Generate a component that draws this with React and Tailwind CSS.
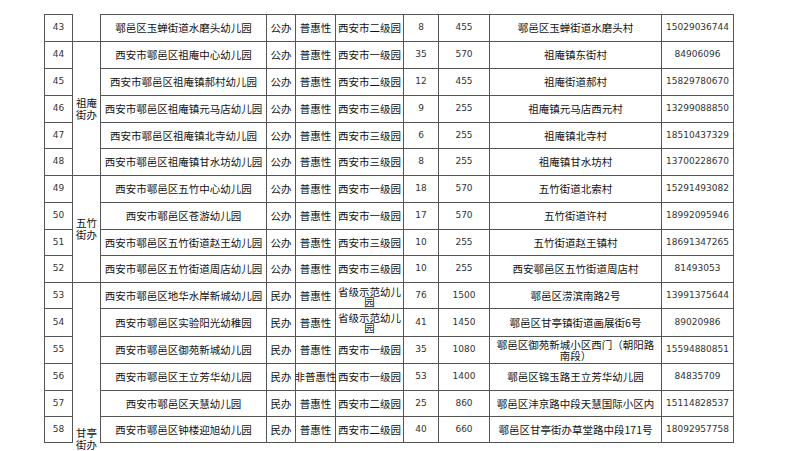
const rows = [
  ["43", "鄠邑区玉蝉街道水磨头幼儿园", "公办", "普惠性", "西安市二级园", "8", "455", "鄠邑区玉蝉街道水磨头村", "15029036744"],
  ["44", "西安市鄠邑区祖庵中心幼儿园", "公办", "普惠性", "西安市一级园", "35", "570", "祖庵镇东街村", "84906096"],
  ["45", "西安市鄠邑区祖庵镇郝村幼儿园", "公办", "普惠性", "西安市二级园", "12", "455", "祖庵街道郝村", "15829780670"],
  ["46", "西安市鄠邑区祖庵镇元马店幼儿园", "公办", "普惠性", "西安市三级园", "9", "255", "祖庵镇元马店西元村", "13299088850"],
  ["47", "西安市鄠邑区祖庵镇北寺幼儿园", "公办", "普惠性", "西安市三级园", "6", "255", "祖庵镇北寺村", "18510437329"],
  ["48", "西安市鄠邑区祖庵镇甘水坊幼儿园", "公办", "普惠性", "西安市三级园", "8", "255", "祖庵镇甘水坊村", "13700228670"],
  ["49", "西安市鄠邑区五竹中心幼儿园", "公办", "普惠性", "西安市一级园", "18", "570", "五竹街道北索村", "15291493082"],
  ["50", "西安市鄠邑区苍游幼儿园", "公办", "普惠性", "西安市一级园", "17", "570", "五竹街道许村", "18992095946"],
  ["51", "西安市鄠邑区五竹街道赵王幼儿园", "公办", "普惠性", "西安市三级园", "10", "255", "五竹街道赵王镇村", "18691347265"],
  ["52", "西安市鄠邑区五竹街道周店幼儿园", "公办", "普惠性", "西安市三级园", "10", "255", "西安鄠邑区五竹街道周店村", "81493053"],
  ["53", "西安市鄠邑区地华水岸新城幼儿园", "民办", "普惠性", "省级示范幼儿园", "76", "1500", "鄠邑区涝滨南路2号", "13991375644"],
  ["54", "西安市鄠邑区实验阳光幼稚园", "民办", "普惠性", "省级示范幼儿园", "41", "1450", "鄠邑区甘亭镇街道画展街6号", "89020986"],
  ["55", "西安市鄠邑区御苑新城幼儿园", "民办", "普惠性", "西安市一级园", "35", "1080", "鄠邑区御苑新城小区西门（朝阳路南段）", "15594880851"],
  ["56", "西安市鄠邑区王立芳华幼儿园", "民办", "非普惠性", "西安市一级园", "53", "1400", "鄠邑区锦玉路王立芳华幼儿园", "84835709"],
  ["57", "西安市鄠邑区天慧幼儿园", "民办", "普惠性", "西安市二级园", "25", "860", "鄠邑区沣京路中段天慧国际小区内", "15114828537"],
  ["58", "西安市鄠邑区钟楼迎旭幼儿园", "民办", "普惠性", "西安市二级园", "40", "660", "鄠邑区甘亭街办草堂路中段171号", "18092957758"],
];

// merged "街办" cells in column 2, keyed by first row index
const groups = {
  0: { span: "", label: null },
  1: { span: "row-span-5", label: "祖庵街办" },
  6: { span: "row-span-4", label: "五竹街办" },
  10: { span: "row-span-6", label: "甘亭街办", open: true },
};

const cjk = "font-['Noto_Sans_CJK_SC','Noto_Sans',sans-serif] text-[10.5px] text-[#111]";
const num = "font-['DejaVu_Sans',sans-serif] text-[9px] text-[#333]";

function Cell({ first, className = "", children }) {
  return (
    <div
      className={`flex items-center justify-center text-center border-r border-b border-[#555] ${first ? "border-t" : ""} ${className}`}
    >
      {children}
    </div>
  );
}

function GroupCell({ g }) {
  if (!g.label) {
    // tail of a merged cell from the previous section
    return <div className="border-r border-b border-[#555]" />;
  }
  // label wraps two characters per line
  const label = <p className={`w-[22px] ${cjk} leading-[12px] text-center`}>{g.label}</p>;
  if (g.open) {
    // merged cell keeps going below the cut, label sits near the bottom
    return (
      <div className={`${g.span} flex flex-col justify-end items-center border-r border-[#555]`}>
        <div className="mb-[-8px]">{label}</div>
      </div>
    );
  }
  return (
    <div className={`${g.span} flex flex-col justify-center items-center border-r border-b border-[#555]`}>
      {label}
    </div>
  );
}

export default function App() {
  return (
    <div className="w-[800px] h-[451px] overflow-hidden bg-white">
      <div className="ml-[44px] mt-[14px] w-[690px] grid grid-cols-[28px_28px_166px_29px_40px_68px_35px_51px_172px_72px] grid-rows-[28px_27px_27px_27px_26px_27px_27px_27px_26px_27px_26px_28px_27px_27px_26px_26px] border-l border-[#555]">
        {rows.map((r, i) => {
          const first = i === 0;
          const g = groups[i];
          const wrapLevel = r[4].length > 6;
          const wrapAddr = r[7].length > 16;
          return [
            <Cell key={`${i}-a`} first={first} className={num}>{r[0]}</Cell>,
            g ? <GroupCell key={`${i}-g`} g={g} /> : null,
            <Cell key={`${i}-b`} first={first} className={`${cjk} whitespace-nowrap`}>{r[1]}</Cell>,
            <Cell key={`${i}-c`} first={first} className={`${cjk} whitespace-nowrap`}>{r[2]}</Cell>,
            <Cell key={`${i}-d`} first={first} className={`${cjk} whitespace-nowrap`}>{r[3]}</Cell>,
            <Cell key={`${i}-e`} first={first} className={`${cjk} ${wrapLevel ? "leading-[10px] items-start pt-[4px]" : "whitespace-nowrap"}`}>{r[4]}</Cell>,
            <Cell key={`${i}-f`} first={first} className={num}>{r[5]}</Cell>,
            <Cell key={`${i}-h`} first={first} className={num}>{r[6]}</Cell>,
            <Cell key={`${i}-i`} first={first} className={`${cjk} ${wrapAddr ? "px-[5px] leading-[11px]" : "whitespace-nowrap"}`}>{r[7]}</Cell>,
            <Cell key={`${i}-j`} first={first} className={num}>{r[8]}</Cell>,
          ];
        })}
      </div>
    </div>
  );
}
